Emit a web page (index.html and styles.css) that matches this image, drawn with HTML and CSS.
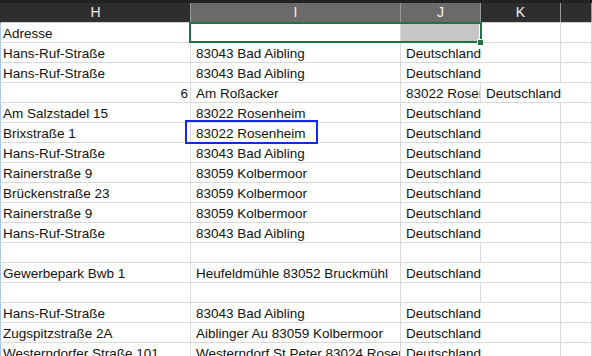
FILE: index.html
```html
<!DOCTYPE html>
<html lang="de">
<head>
    <meta charset="UTF-8">
    <title>Adressen</title>
    <link rel="stylesheet" href="styles.css">
</head>
<body>
    <div class="sheet">
        <div class="topbar"></div>

        <!-- Spaltenköpfe -->
        <div class="row head">
            <div class="cell">H</div>
            <div class="cell sel">I</div>
            <div class="cell sel">J</div>
            <div class="cell">K</div>
            <div class="cell"></div>
        </div>

        <div class="row">
            <div class="cell first">Adresse</div>
            <div class="cell"></div>
            <div class="cell"><div class="fill"></div></div>
            <div class="cell"></div>
            <div class="cell"></div>
        </div>
        <div class="row">
            <div class="cell first">Hans-Ruf-Straße</div>
            <div class="cell">83043 Bad Aibling</div>
            <div class="cell spill">Deutschland</div>
            <div class="cell"></div>
            <div class="cell"></div>
        </div>
        <div class="row">
            <div class="cell first">Hans-Ruf-Straße</div>
            <div class="cell">83043 Bad Aibling</div>
            <div class="cell spill">Deutschland</div>
            <div class="cell"></div>
            <div class="cell"></div>
        </div>
        <div class="row">
            <div class="cell first num">6</div>
            <div class="cell">Am Roßacker</div>
            <div class="cell clip">83022 Rosenheim</div>
            <div class="cell spill">Deutschland</div>
            <div class="cell"></div>
        </div>
        <div class="row">
            <div class="cell first">Am Salzstadel 15</div>
            <div class="cell">83022 Rosenheim</div>
            <div class="cell spill">Deutschland</div>
            <div class="cell"></div>
            <div class="cell"></div>
        </div>
        <div class="row">
            <div class="cell first">Brixstraße 1</div>
            <div class="cell">83022 Rosenheim</div>
            <div class="cell spill">Deutschland</div>
            <div class="cell"></div>
            <div class="cell"></div>
        </div>
        <div class="row">
            <div class="cell first">Hans-Ruf-Straße</div>
            <div class="cell">83043 Bad Aibling</div>
            <div class="cell spill">Deutschland</div>
            <div class="cell"></div>
            <div class="cell"></div>
        </div>
        <div class="row">
            <div class="cell first">Rainerstraße 9</div>
            <div class="cell">83059 Kolbermoor</div>
            <div class="cell spill">Deutschland</div>
            <div class="cell"></div>
            <div class="cell"></div>
        </div>
        <div class="row">
            <div class="cell first">Brückenstraße 23</div>
            <div class="cell">83059 Kolbermoor</div>
            <div class="cell spill">Deutschland</div>
            <div class="cell"></div>
            <div class="cell"></div>
        </div>
        <div class="row">
            <div class="cell first">Rainerstraße 9</div>
            <div class="cell">83059 Kolbermoor</div>
            <div class="cell spill">Deutschland</div>
            <div class="cell"></div>
            <div class="cell"></div>
        </div>
        <div class="row">
            <div class="cell first">Hans-Ruf-Straße</div>
            <div class="cell">83043 Bad Aibling</div>
            <div class="cell spill">Deutschland</div>
            <div class="cell"></div>
            <div class="cell"></div>
        </div>
        <div class="row">
            <div class="cell first"></div>
            <div class="cell"></div>
            <div class="cell"></div>
            <div class="cell"></div>
            <div class="cell"></div>
        </div>
        <div class="row">
            <div class="cell first">Gewerbepark Bwb 1</div>
            <div class="cell">Heufeldmühle 83052 Bruckmühl</div>
            <div class="cell spill">Deutschland</div>
            <div class="cell"></div>
            <div class="cell"></div>
        </div>
        <div class="row">
            <div class="cell first"></div>
            <div class="cell"></div>
            <div class="cell"></div>
            <div class="cell"></div>
            <div class="cell"></div>
        </div>
        <div class="row">
            <div class="cell first">Hans-Ruf-Straße</div>
            <div class="cell">83043 Bad Aibling</div>
            <div class="cell spill">Deutschland</div>
            <div class="cell"></div>
            <div class="cell"></div>
        </div>
        <div class="row">
            <div class="cell first">Zugspitzstraße 2A</div>
            <div class="cell">Aiblinger Au 83059 Kolbermoor</div>
            <div class="cell spill">Deutschland</div>
            <div class="cell"></div>
            <div class="cell"></div>
        </div>
        <div class="row">
            <div class="cell first">Westerndorfer Straße 101</div>
            <div class="cell clip">Westerndorf St.Peter 83024 Rosenheim</div>
            <div class="cell spill">Deutschland</div>
            <div class="cell"></div>
            <div class="cell"></div>
        </div>

        <!-- Markierung I1:J1 und Hervorhebung I6 -->
        <div class="selection"></div>
        <div class="handle"></div>
        <div class="marker"></div>
    </div>
</body>
</html>
```

FILE: styles.css
```css
body {
    margin: 0;
    padding: 0;
    background-color: #ffffff;
    font-family: "Liberation Sans", Arial, sans-serif;
    font-size: 13.5px;
    color: #111111;
}

.sheet {
    position: relative;
    width: 592px;
    height: 356px;
    overflow: hidden;
}

.topbar {
    height: 3px;
    background-color: #222222;
}

.row {
    display: grid;
    grid-template-columns: 190px 210px 80px 80px 1fr;
    height: 20px;
    box-sizing: border-box;
    border-left: 1px solid #a9c6e6;
    border-bottom: 1px solid #dadada;
}

.cell {
    position: relative;
    box-sizing: border-box;
    border-right: 1px solid #dadada;
    padding: 2px 0 0 5px;
    line-height: 17px;
    white-space: nowrap;
}

.cell.first {
    padding-left: 2px;
}

.cell.num {
    text-align: right;
    padding-right: 2px;
}

.cell.clip {
    overflow: hidden;
}

/* Text läuft in die leere Nachbarzelle */
.cell.spill {
    border-right-color: transparent;
    z-index: 1;
}

/* Spaltenköpfe */
.row.head {
    height: 20px;
    background-color: #2e2e2e;
    border-left: 1px solid #2e2e2e;
    border-bottom: 1px solid #d0d0d0;
    color: #f2f2f2;
    font-size: 14px;
}

.row.head .cell {
    text-align: center;
    padding: 1px 0 0 0;
    border-right-color: #9a9a9a;
}

.row.head .cell.sel {
    background-color: #6a6a6a;
}

.fill {
    position: absolute;
    left: 0;
    top: 1px;
    right: 1px;
    bottom: 1px;
    background-color: #c6c6c6;
}

.selection {
    position: absolute;
    left: 189px;
    top: 22px;
    width: 289px;
    height: 17px;
    border: 2px solid #217346;
}

.handle {
    position: absolute;
    left: 477px;
    top: 39px;
    width: 5px;
    height: 5px;
    background-color: #217346;
    border: 1px solid #ffffff;
}

.marker {
    position: absolute;
    left: 185px;
    top: 120px;
    width: 129px;
    height: 20px;
    border: 2px solid #1328ea;
}
```
